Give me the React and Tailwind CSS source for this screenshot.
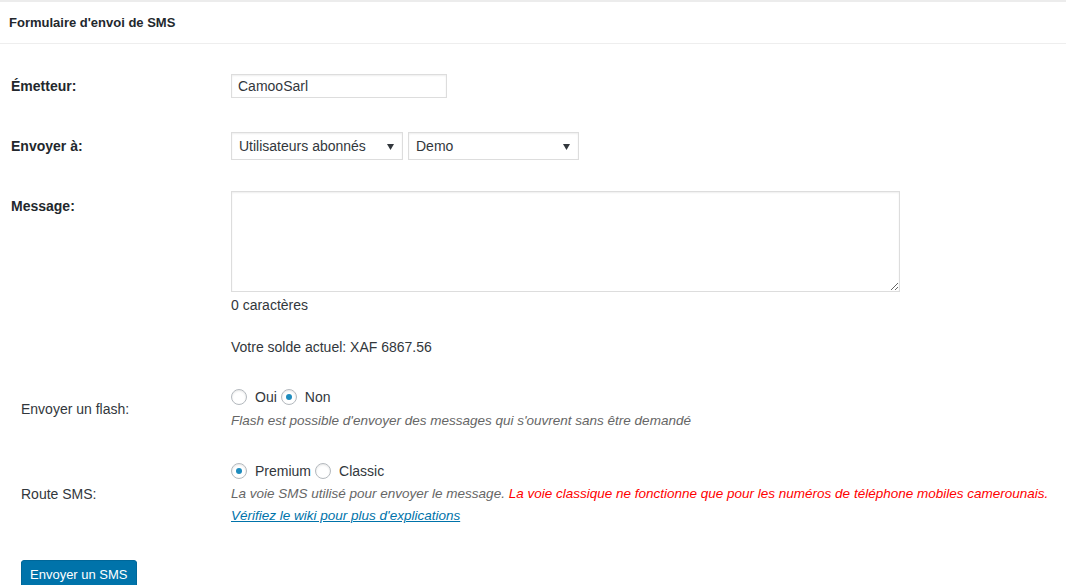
import React from "react";

function Radio({ checked, label }) {
  return (
    <label className="flex items-center">
      <span className="w-4 h-4 shrink-0 rounded-full border border-[#b4b9be] bg-white shadow-[inset_0_1px_2px_rgba(0,0,0,0.1)] flex items-center justify-center">
        {checked && <span className="w-[6px] h-[6px] rounded-full bg-[#1e8cbe]" />}
      </span>
      <span className="ml-[8px] mr-[4px]">{label}</span>
    </label>
  );
}

function Select({ value, width }) {
  return (
    <div
      className={`relative h-[28px] border border-[#ddd] bg-white shadow-[inset_0_1px_2px_rgba(0,0,0,0.07)] flex items-center pl-[7px] ${width}`}
    >
      <span>{value}</span>
      <svg className="absolute right-[8px] top-[11px]" width="7" height="6" viewBox="0 0 7 6">
        <path d="M0 0 L7 0 L3.5 6 Z" fill="#32373c" />
      </svg>
    </div>
  );
}

export default function App() {
  return (
    <div
      className="w-[1066px] h-[585px] overflow-hidden bg-white text-[14px] text-[#32373c]"
      style={{ fontFamily: '"Liberation Sans", Arial, sans-serif' }}
    >
      <div className="border-t-2 border-[#ececec]">
        <div className="h-[42px] border-b border-[#eeeeee] flex items-center pl-[9px]">
          <h2 className="text-[13px] font-bold text-[#23282d]">Formulaire d'envoi de SMS</h2>
        </div>

        {/* Émetteur */}
        <div className="flex items-center mt-[30px]">
          <div className="w-[231px] pl-[11px] font-bold text-[#23282d]">Émetteur:</div>
          <div className="w-[216px] h-[24px] border border-[#ddd] shadow-[inset_0_1px_2px_rgba(0,0,0,0.07)] flex items-center pl-[6px]">
            CamooSarl
          </div>
        </div>

        {/* Envoyer à */}
        <div className="flex items-center mt-[34px]">
          <div className="w-[231px] pl-[11px] font-bold text-[#23282d]">Envoyer à:</div>
          <div className="flex gap-[5px]">
            <Select value="Utilisateurs abonnés" width="w-[172px]" />
            <Select value="Demo" width="w-[171px]" />
          </div>
        </div>

        {/* Message */}
        <div className="flex mt-[31px]">
          <div className="w-[231px] pl-[11px] pt-[5px] leading-[20px] font-bold text-[#23282d]">Message:</div>
          <div className="flex flex-col">
            <textarea
              className="w-[669px] h-[101px] border border-[#ddd] shadow-[inset_0_1px_2px_rgba(0,0,0,0.07)] outline-none"
              defaultValue=""
            />
            <div className="mt-[3px] leading-[20px]">0 caractères</div>
            <div className="mt-[22px] leading-[20px]">Votre solde actuel: XAF 6867.56</div>
          </div>
        </div>

        {/* Flash */}
        <div className="flex items-center mt-[30px]">
          <div className="w-[231px] pl-[21px]">Envoyer un flash:</div>
          <div className="flex flex-col">
            <div className="flex items-center h-[20px] leading-[20px]">
              <Radio label="Oui" />
              <Radio checked label="Non" />
            </div>
            <div className="mt-[3px] leading-[22px] text-[13.5px] italic text-[#666]">
              Flash est possible d'envoyer des messages qui s'ouvrent sans être demandé
            </div>
          </div>
        </div>

        {/* Route */}
        <div className="flex items-center mt-[29px]">
          <div className="w-[231px] pl-[21px]">Route SMS:</div>
          <div className="flex flex-col">
            <div className="flex items-center h-[20px] leading-[20px]">
              <Radio checked label="Premium" />
              <Radio label="Classic" />
            </div>
            <div className="mt-[2px] leading-[22px] text-[13.5px] italic text-[#666] whitespace-nowrap">
              La voie SMS utilisé pour envoyer le message.{" "}
              <span className="text-[#ff0000]">
                La voie classique ne fonctionne que pour les numéros de téléphone mobiles camerounais.
              </span>
            </div>
            <div className="leading-[22px] text-[13.5px] italic">
              <a href="#" className="text-[#0073aa] underline">Vérifiez le wiki pour plus d'explications</a>
            </div>
          </div>
        </div>

        <div className="mt-[33px] pl-[21px]">
          <button className="h-[30px] px-[8px] rounded-[3px] bg-[#0073aa] border border-[#006799] text-white text-[13px] shadow-[0_1px_0_#006799]">
            Envoyer un SMS
          </button>
        </div>
      </div>
    </div>
  );
}
